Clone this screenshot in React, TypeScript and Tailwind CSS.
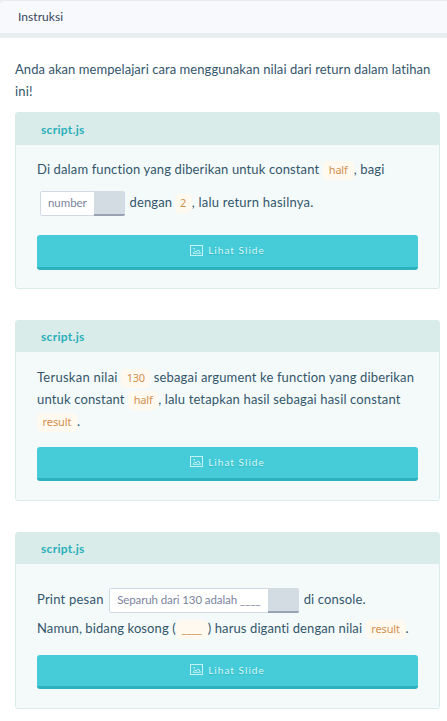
import type { ReactNode } from "react";

function Code({ children, className }: { children: ReactNode; className: string }) {
  return (
    <code className={`inline-block h-[19px] rounded-[5px] bg-[#fff9ef] text-center align-middle font-['Noto_Sans',sans-serif] text-[11px] leading-[18px] text-[#d3904f] ${className}`}>
      {children}
    </code>
  );
}

function CopyBox({ children, className }: { children: ReactNode; className: string }) {
  return (
    <span className={`inline-flex h-[25px] overflow-hidden rounded-[2px] align-middle text-[11.5px] leading-[22px] text-[#7c849c] ${className}`}>
      <span className="flex-1 rounded-l-[2px] border border-r-0 border-[#d2d9e2] bg-white pl-[7px]">{children}</span>
      <span className="w-[31px] shrink-0 border-b-2 border-[#99a2b5] bg-[#d3dbe3]" />
    </span>
  );
}

function SlideIcon() {
  return (
    <svg className="h-[11px] w-[13px]" viewBox="0 0 13 11" fill="none" stroke="currentColor">
      <rect x="0.5" y="0.5" width="12" height="10" strokeOpacity="0.85" />
      <path d="M3 8.3h7.5L8.8 5.2H7.6L6.2 7 4.8 6.2 3 7.8" strokeWidth="0.8" />
      <circle cx="4.2" cy="3.8" r="0.5" strokeWidth="0.8" />
    </svg>
  );
}

function SlideButton({ className }: { className: string }) {
  return (
    <button className={`flex w-[381px] items-center justify-center gap-[5px] rounded-[3px] border-b-[3px] border-[#2db1bd] bg-[#46cbd8] pb-[2px] text-[10px] leading-[14px] tracking-[1.05px] text-[#dcfafa] [text-shadow:0_1px_1px_#2db1bd] ${className}`}>
      <SlideIcon />
      <span>Lihat Slide</span>
    </button>
  );
}

function Card({ className, headClass, children }: { className: string; headClass: string; children: ReactNode }) {
  return (
    <section className={`w-[425px] rounded-[3px] border border-[#d9ecea] bg-[#f4fafa] ${className}`}>
      <h2 className={`bg-[#d9ecea] pl-[25px] text-[12px] font-bold tracking-[0.3px] text-[#2aafb9] ${headClass}`}>script.js</h2>
      <div className="px-[21px]">{children}</div>
    </section>
  );
}

function Line({ children, className = "" }: { children: ReactNode; className?: string }) {
  return <div className={`h-[22px] whitespace-nowrap leading-[22px] ${className}`}>{children}</div>;
}

export default function App() {
  return (
    <div className="h-[721px] w-[447px] overflow-hidden bg-white font-[Lato,sans-serif] text-[13px] tracking-[0.15px] text-[#33566b]">
      <div className="h-[38px] border-b-[5px] border-t border-[#e9edf0] bg-[#e9edf0]">
        <header className="h-[32px] rounded-tl-[4px] bg-[#f8f9fd] pl-[18px] text-[12px] leading-[31px] tracking-[0.05px] text-[#34475a]">Instruksi</header>
      </div>
      <main className="px-[15px] pt-[20px]">
        <Line className="tracking-[0.06px]">Anda akan mempelajari cara menggunakan nilai dari return dalam latihan</Line>
        <Line>ini!</Line>
        <Card className="mt-[10px] h-[177px]" headClass="h-[32px] leading-[33px]">
          <Line className="mt-[13px] tracking-[0.13px]">Di dalam function yang diberikan untuk constant <Code className="w-[31px] tracking-[-0.2px]">half</Code>, bagi</Line>
          <Line className="mt-[11px]"><CopyBox className="ml-[3px] w-[85px] tracking-[-0.05px]">number</CopyBox>{" "}<span className="ml-[1px]">dengan</span> <Code className="-ml-[1px] w-[17px]">2</Code><span className="tracking-[0.22px]">, lalu return hasilnya.</span></Line>
          <SlideButton className="mt-[22px] h-[35px]" />
        </Card>
        <Card className="mt-[31px] h-[181px]" headClass="h-[31px] leading-[31px]">
          <Line className="mt-[14px]"><span className="tracking-[0.25px]">Teruskan nilai </span><Code className="w-[29px] tracking-[-0.2px]">130</Code> sebagai argument ke function yang diberikan</Line>
          <Line>untuk constant <Code className="w-[30px] tracking-[-0.2px]">half</Code>, lalu tetapkan hasil sebagai hasil constant</Line>
          <Line><Code className="w-[40px] tracking-[-0.1px]">result</Code>.</Line>
          <SlideButton className="mt-[15px] h-[34px]" />
        </Card>
        <Card className="mt-[31px] h-[177px]" headClass="h-[31px] leading-[31px]">
          <Line className="mt-[24px]"><span className="tracking-[0.22px]">Print pesan </span><CopyBox className="ml-[2px] w-[190px] tracking-[-0.1px]">Separuh dari 130 adalah ____</CopyBox>{" "}<span className="ml-[1px]">di console.</span></Line>
          <Line className="mt-[7px] tracking-[0.1px]">Namun, bidang kosong (<Code className="w-[32px]">____</Code>) harus diganti dengan nilai <Code className="w-[40px] tracking-[-0.1px]">result</Code>.</Line>
          <SlideButton className="mt-[16px] h-[34px]" />
        </Card>
      </main>
    </div>
  );
}
